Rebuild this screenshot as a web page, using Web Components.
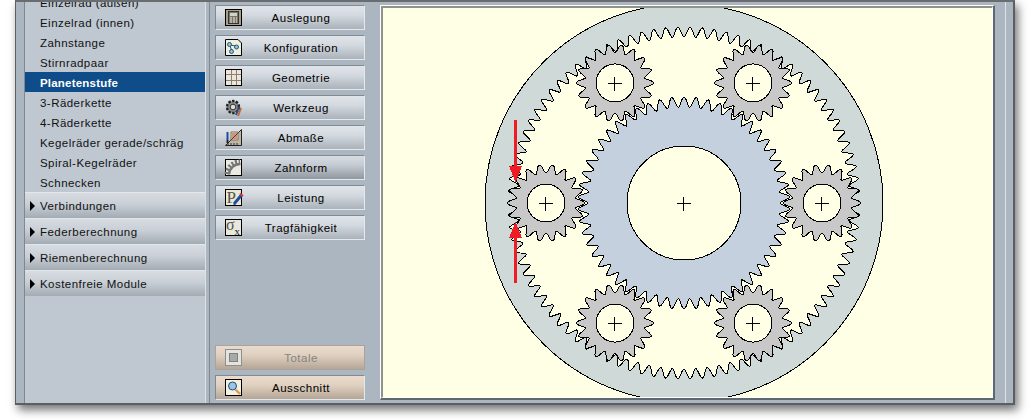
<!DOCTYPE html>
<html>
<head>
<meta charset="utf-8">
<title>Planetenstufe</title>
<style>
  html, body { margin: 0; background: #fff; }
  body { width: 1030px; height: 420px; overflow: hidden; font-family: "Liberation Sans", Arial, sans-serif; }
</style>
</head>
<body>
<app-window>
  <side-menu slot="menu">
    <menu-item>Einzelrad (außen)</menu-item>
    <menu-item>Einzelrad (innen)</menu-item>
    <menu-item>Zahnstange</menu-item>
    <menu-item>Stirnradpaar</menu-item>
    <menu-item active>Planetenstufe</menu-item>
    <menu-item>3-Räderkette</menu-item>
    <menu-item>4-Räderkette</menu-item>
    <menu-item>Kegelräder gerade/schräg</menu-item>
    <menu-item>Spiral-Kegelräder</menu-item>
    <menu-item>Schnecken</menu-item>
    <menu-group>Verbindungen</menu-group>
    <menu-group>Federberechnung</menu-group>
    <menu-group>Riemenberechnung</menu-group>
    <menu-group>Kostenfreie Module</menu-group>
  </side-menu>
  <tool-panel slot="tools">
    <tool-button icon="calc">Auslegung</tool-button>
    <tool-button icon="config">Konfiguration</tool-button>
    <tool-button icon="grid">Geometrie</tool-button>
    <tool-button icon="tool">Werkzeug</tool-button>
    <tool-button icon="measure">Abmaße</tool-button>
    <tool-button icon="tooth" dark>Zahnform</tool-button>
    <tool-button icon="power">Leistung</tool-button>
    <tool-button icon="sigma">Tragfähigkeit</tool-button>
    <tool-button slot="bottom" icon="square" warm disabled>Totale</tool-button>
    <tool-button slot="bottom" icon="zoom" warm>Ausschnitt</tool-button>
  </tool-panel>
  <gear-canvas slot="canvas"></gear-canvas>
</app-window>

<script>
class AppWindow extends HTMLElement {
    constructor() {
        super();
        const shadow = this.attachShadow({ mode: 'open' });
        shadow.innerHTML = `
            <style>
                :host {
                    display: grid;
                    grid-template-columns: 8px 1px 180px 1px 3px 1px 170px 1fr 1px 7px;
                    box-sizing: border-box;
                    width: 1000px;
                    height: 405px;
                    margin-left: 15px;
                    background: #abb6c1;
                    border: solid #5c5f62;
                    border-width: 2px 2px 2px 1px;
                    border-top-color: #6a6d70;
                    box-shadow: 3px 5px 9px rgba(0,0,0,.55);
                }
                .dark { background: #7d8890; }
                .light { background: #dde2e7; }
                .menu { min-height: 0; overflow: hidden; background: #bfc8d1; }
            </style>
            <div></div>
            <div class="dark"></div>
            <div class="menu"><slot name="menu"></slot></div>
            <div class="light"></div>
            <div></div>
            <div class="dark"></div>
            <slot name="tools"></slot>
            <slot name="canvas"></slot>
            <div class="light"></div>
            <div></div>
        `;
    }
}

class SideMenu extends HTMLElement {
    constructor() {
        super();
        const shadow = this.attachShadow({ mode: 'open' });
        shadow.innerHTML = `
            <style>
                :host { display: flex; flex-direction: column; margin-top: -10px; }
            </style>
            <slot></slot>
        `;
    }
}

class MenuItem extends HTMLElement {
    constructor() {
        super();
        const shadow = this.attachShadow({ mode: 'open' });
        shadow.innerHTML = `
            <style>
                :host {
                    display: flex;
                    flex: none;
                    align-items: center;
                    box-sizing: border-box;
                    height: 20px;
                    padding: 1px 0 0 15px;
                    font-size: 11.5px;
                    letter-spacing: .45px;
                    color: #111;
                }
                :host([active]) { background: #0f4d8a; color: #fff; font-weight: bold; letter-spacing: .2px; }
            </style>
            <slot></slot>
        `;
    }
}

class MenuGroup extends HTMLElement {
    constructor() {
        super();
        const shadow = this.attachShadow({ mode: 'open' });
        shadow.innerHTML = `
            <style>
                :host {
                    display: flex;
                    flex: none;
                    align-items: center;
                    gap: 5px;
                    box-sizing: border-box;
                    height: 26px;
                    padding-left: 5px;
                    font-size: 11.5px;
                    letter-spacing: .45px;
                    color: #111;
                    border-top: 1px solid #e3e7eb;
                    background: linear-gradient(#d7dce1, #c9cfd6 45%, #a3abb4);
                }
                svg { flex: none; }
            </style>
            <svg width="5" height="10" viewBox="0 0 5 10"><path d="M0 0 L5 5 L0 10 Z" fill="#000"/></svg>
            <slot></slot>
        `;
    }
}

const ICONS = {
    calc: `<rect x=".5" y=".5" width="16" height="16" fill="#a9a08c" stroke="#000"/>
           <rect x="3.5" y="2.5" width="10" height="12" fill="#7d7566" stroke="#333"/>
           <rect x="5" y="4" width="7" height="3" fill="#cfd4c8"/>
           <path d="M5 9h2M8 9h2M11 9h1M5 11h2M8 11h2M11 11h1M5 13h2M8 13h2M11 13h1" stroke="#eee" fill="none"/>`,
    config: `<path d="M.5 .5H13L16.5 4V16.5H.5Z" fill="#f1efe0" stroke="#000"/>
             <path d="M5 6L11 7M5 7L7 12" stroke="#444" fill="none"/>
             <circle cx="4.5" cy="5.5" r="2" fill="#8fc4dc" stroke="#1c5a7c"/>
             <circle cx="11.5" cy="8" r="2" fill="#8fc4dc" stroke="#1c5a7c"/>
             <circle cx="6.5" cy="12.5" r="2" fill="#8fc4dc" stroke="#1c5a7c"/>`,
    grid: `<rect x=".5" y=".5" width="16" height="16" fill="#ece6da" stroke="#000"/>
           <path d="M6.5 1V16M11.5 1V16M1 5.5H16M1 11.5H16" stroke="#8d7f74" fill="none"/>`,
    tool: `<circle cx="8" cy="8" r="6" fill="#8a8a8a" stroke="#222" stroke-dasharray="2.4 1.4" stroke-width="2.4"/>
           <circle cx="8" cy="8" r="2.8" fill="#ddd" stroke="#333"/>
           <path d="M14 8L11 16" stroke="#24509c" stroke-width="2"/>
           <path d="M16 9L13 17" stroke="#c9662a" stroke-width="2"/>`,
    measure: `<path d="M16.5 .5V16.5H.5Z" fill="#bdb7a6" stroke="#222"/>
              <path d="M6 3H13V11H6Z" fill="#eadfc8" stroke="#8a6a55"/>
              <path d="M7 5H12M7 7H12M7 9H12" stroke="#b34a3c"/>
              <path d="M13 4L5 12" stroke="#444"/>
              <path d="M2.5 3V11" stroke="#1f4d9a" stroke-width="2"/>
              <path d="M2.5 11V14" stroke="#222" stroke-width="2"/>
              <path d="M3 16V14M6 16V14M9 16V14M12 16V14" stroke="#333"/>`,
    tooth: `<rect x=".5" y=".5" width="16" height="16" fill="#ecebe2" stroke="#000"/>
            <path d="M2 15A13 13 0 0 1 15 3" fill="none" stroke="#77777a" stroke-width="5" stroke-dasharray="2 1.6"/>
            <path d="M4 15.500A11 11 0 0 1 15.500 5" fill="none" stroke="#77777a" stroke-width="2.5"/>`,
    power: `<rect x=".5" y=".5" width="16" height="16" fill="#ece8d2" stroke="#000"/>
            <text x="1.5" y="14" font-family="Liberation Serif" font-size="17" fill="#555">P</text>
            <path d="M9 15L16.500 6" stroke="#1f4da0" stroke-width="3"/>
            <path d="M15 4.500L18 7" stroke="#d43a3a" stroke-width="2"/>
            <path d="M9 15L8 17L10.500 16.500Z" fill="#000"/>`,
    sigma: `<rect x=".5" y=".5" width="16" height="16" fill="#e9e8dc" stroke="#000"/>
            <text x="1" y="11" font-family="Liberation Serif" font-size="16" fill="#555">σ</text>
            <text x="9.5" y="15.500" font-family="Liberation Serif" font-size="11" fill="#222">x</text>`,
    square: `<rect x=".5" y=".5" width="16" height="16" fill="#e4e3e0" stroke="#8e8e8e"/>
             <rect x="4.500" y="4.500" width="8" height="8" fill="#a8a8a8" stroke="#808080"/>`,
    zoom: `<rect x=".5" y=".5" width="16" height="16" fill="#f3f0e4" stroke="#000"/>
           <circle cx="7.500" cy="7" r="4" fill="#9cc4e8" stroke="#2c4a6a"/>
           <path d="M10.500 10.500L15 15" stroke="#e09a50" stroke-width="2.400"/>`
};

class ToolButton extends HTMLElement {
    constructor() {
        super();
        const shadow = this.attachShadow({ mode: 'open' });
        const icon = ICONS[this.getAttribute('icon')] || '';
        shadow.innerHTML = `
            <style>
                :host {
                    display: grid;
                    grid-template-columns: 29px 1fr 7px;
                    align-items: center;
                    box-sizing: border-box;
                    height: 25px;
                    font-size: 11.5px;
                    letter-spacing: .5px;
                    color: #000;
                    border: 1px solid;
                    border-color: #7f8a93 #e4e8ec #e4e8ec #7f8a93;
                    background: linear-gradient(#e0e5ea, #d3d9df 40%, #aab2ba);
                }
                :host([dark]) { background: linear-gradient(#d8dde2, #c4cad1 40%, #8f979f); }
                :host([warm]) { background: linear-gradient(#eadbcc, #e0d0c0 40%, #b4a696); }
                :host([disabled]) { color: #86847f; border-color: #a9a39b; }
                svg { display: block; margin-left: 9px; overflow: visible; }
                .label { text-align: center; padding-top: 1px; }
            </style>
            <svg width="17" height="17" viewBox="0 0 17 17">${icon}</svg>
            <div class="label"><slot></slot></div>
        `;
    }
}

class ToolPanel extends HTMLElement {
    constructor() {
        super();
        const shadow = this.attachShadow({ mode: 'open' });
        shadow.innerHTML = `
            <style>
                :host {
                    display: flex;
                    flex-direction: column;
                    justify-content: space-between;
                    box-sizing: border-box;
                    padding: 3px 15px 3px 5px;
                    min-height: 0;
                }
                .stack { display: flex; flex-direction: column; gap: 5px; }
            </style>
            <div class="stack"><slot></slot></div>
            <div class="stack"><slot name="bottom"></slot></div>
        `;
    }
}

// outline of a toothed circle: n teeth, radius r1 at phase, r2 half a pitch later
function gearPath(cx, cy, n, r1, r2, phase) {
    const pts = [];
    const pitch = 2 * Math.PI / n;
    const steps = 16;
    for (let i = 0; i < n; i++) {
        for (let s = 0; s < steps; s++) {
            const t = s / steps;
            const a = (phase * Math.PI / 180) + (i + t) * pitch;
            const r = r2 + (r1 - r2) * (Math.cos(t * 2 * Math.PI) + 1) / 2;
            pts.push((cx + r * Math.cos(a)).toFixed(2) + ' ' + (cy + r * Math.sin(a)).toFixed(2));
        }
    }
    return 'M' + pts.join('L') + 'Z';
}

function cross(cx, cy) {
    return `<path d="M${cx - 7} ${cy}H${cx + 7}M${cx} ${cy - 7}V${cy + 7}" stroke="#000" fill="none"/>`;
}

class GearCanvas extends HTMLElement {
    constructor() {
        super();
        const shadow = this.attachShadow({ mode: 'open' });
        const cx = 301, cy = 195;
        const circle = (x, y, r) => `M${x - r} ${y}a${r} ${r} 0 1 0 ${2 * r} 0a${r} ${r} 0 1 0 ${-2 * r} 0Z`;

        let planets = '';
        for (let k = 0; k < 6; k++) {
            const a = k * Math.PI / 3;
            const x = cx + 138 * Math.cos(a), y = cy + 138 * Math.sin(a) * .87 / .866;
            planets += `<path d="${gearPath(x, y, 18, 38.5, 30, 0)}${circle(x, y, 19)}" fill="#c8c8c8" fill-rule="evenodd" stroke="#000"/>`;
            planets += cross(Math.round(x) - .5, Math.round(y) + .5);
        }

        shadow.innerHTML = `
            <style>
                :host {
                    display: block;
                    box-sizing: border-box;
                    margin: 3px 0;
                    width: 615px;
                    height: 395px;
                    border: solid;
                    border-width: 1px 2px 2px 1px;
                    border-color: #fff #5d686f #5d686f #fff;
                }
                .frame {
                    box-sizing: border-box;
                    height: 100%;
                    background: #ffffe5;
                    border: solid;
                    border-width: 2px 1px 1px 2px;
                    border-color: #8e918c #fff #fff #8e918c;
                }
                svg { display: block; }
            </style>
            <div class="frame">
                <svg width="609" height="389" viewBox="0 0 609 389" shape-rendering="crispEdges">
                    <path d="${circle(cx, cy, 199)}${gearPath(cx, cy, 90, 176, 166, 0)}"
                          fill="#cfdad8" fill-rule="evenodd" stroke="#000"/>
                    <path d="${gearPath(cx, cy, 54, 106, 96, 60 / 18)}${circle(cx, cy, 57)}"
                          fill="#c5d0df" fill-rule="evenodd" stroke="#000"/>
                    ${cross(cx - .5, cy + .5)}
                    ${planets}
                    <g fill="#ee1c25">
                        <rect x="131" y="112" width="3" height="46"/>
                        <path d="M126 158H139L132.500 174Z"/>
                        <rect x="131" y="230" width="3" height="45"/>
                        <path d="M126 230H139L132.500 214Z"/>
                    </g>
                </svg>
            </div>
        `;
    }
}

customElements.define('app-window', AppWindow);
customElements.define('side-menu', SideMenu);
customElements.define('menu-item', MenuItem);
customElements.define('menu-group', MenuGroup);
customElements.define('tool-button', ToolButton);
customElements.define('tool-panel', ToolPanel);
customElements.define('gear-canvas', GearCanvas);
</script>
</body>
</html>
